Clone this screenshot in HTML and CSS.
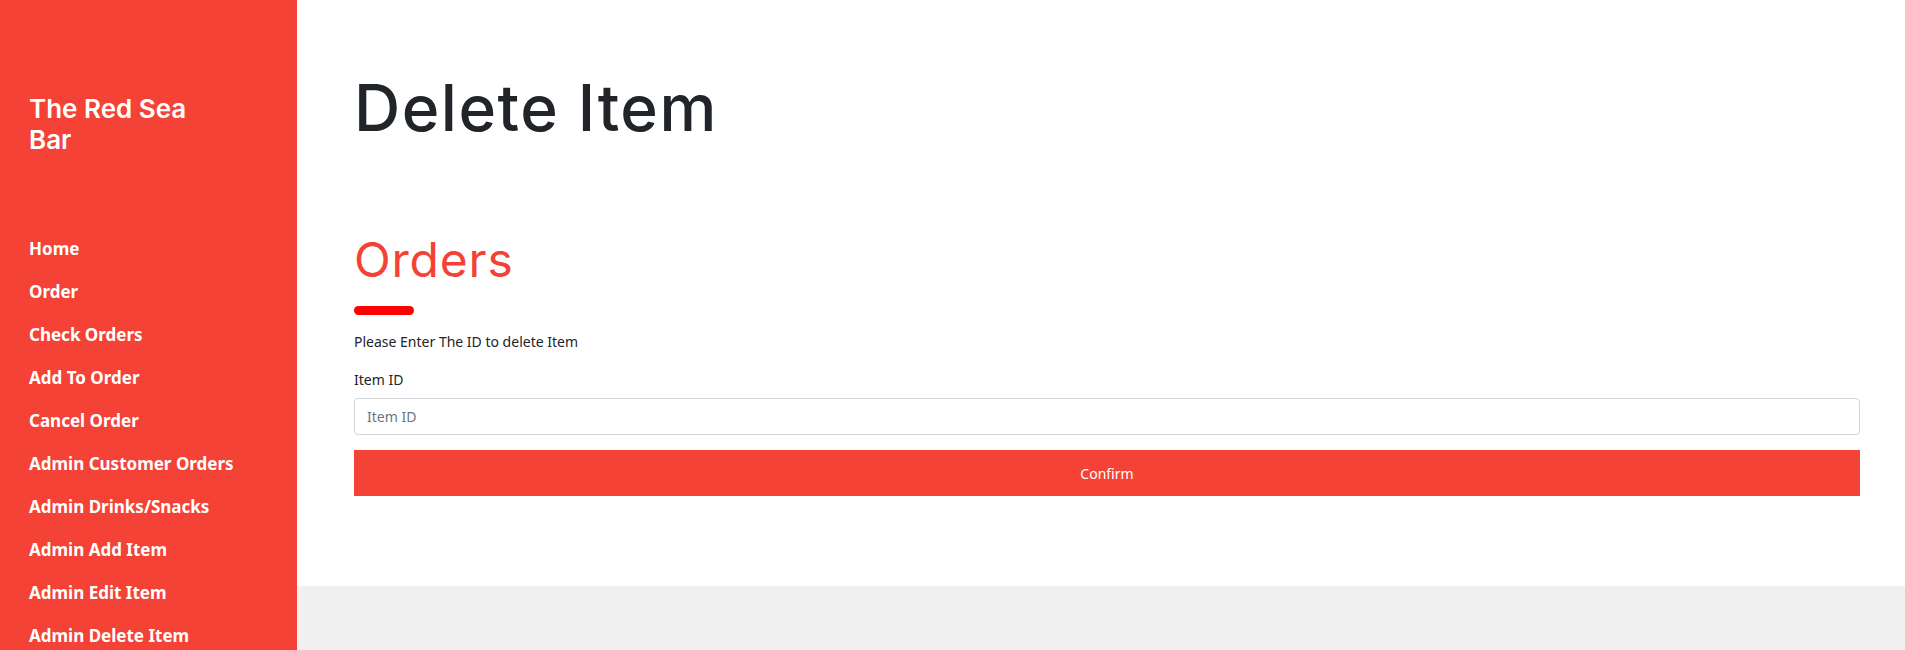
FILE: index.html
```html
<!DOCTYPE html>
<html lang="en">
<head>
<meta charset="utf-8">
<title>Delete Item</title>
<link rel="stylesheet" href="styles.css">
</head>
<body>
<aside class="sidebar">
  <h3 class="brand">The Red Sea Bar</h3>
  <ul class="nav">
    <li><a href="#">Home</a></li>
    <li><a href="#">Order</a></li>
    <li><a href="#">Check Orders</a></li>
    <li><a href="#">Add To Order</a></li>
    <li><a href="#">Cancel Order</a></li>
    <li><a href="#">Admin Customer Orders</a></li>
    <li><a href="#">Admin Drinks/Snacks</a></li>
    <li><a href="#">Admin Add Item</a></li>
    <li><a href="#">Admin Edit Item</a></li>
    <li><a href="#">Admin Delete Item</a></li>
  </ul>
</aside>
<main class="main">
  <section class="panel">
    <h1 class="page-title">Delete Item</h1>
    <h2 class="section-title">Orders</h2>
    <div class="underline"></div>
    <p class="intro">Please Enter The ID to delete Item</p>
    <form class="form">
      <label class="label" for="itemid">Item ID</label>
      <input class="input" id="itemid" type="text" placeholder="Item ID">
      <button class="btn" type="button">Confirm</button>
    </form>
  </section>
</main>
</body>
</html>
```
FILE: styles.css
```css
html, body {
  margin: 0;
  padding: 0;
  height: 100%;
}
body {
  display: flex;
  background: #f0f0f0;
  font-family: "Noto Sans", "Open Sans", sans-serif;
  color: #212529;
  overflow: hidden;
}
.sidebar {
  width: 297px;
  flex: 0 0 297px;
  background: #f44336;
  padding: 93px 0 0 29px;
  box-sizing: border-box;
  min-height: 650px;
}
.brand {
  margin: 0;
  width: 180px;
  font-family: "Inter", sans-serif;
  font-weight: 600;
  font-size: 26px;
  line-height: 31px;
  letter-spacing: 0;
  color: #fff;
}
.nav {
  list-style: none;
  margin: 72px 0 0;
  padding: 0;
}
.nav li {
  height: 43px;
  line-height: 43px;
}
.nav a {
  color: #fff;
  text-decoration: none;
  font-weight: 700;
  font-size: 17px;
  letter-spacing: 0;
}
.main {
  flex: 1;
}
.panel {
  background: #fff;
  height: 586px;
  box-sizing: border-box;
  padding: 70px 45px 0 57px;
}
.page-title {
  margin: 0;
  font-family: "Inter", sans-serif;
  font-weight: 500;
  font-size: 64px;
  line-height: 76px;
  letter-spacing: 1.5px;
  color: #212529;
}
.section-title {
  margin: 86px 0 0;
  font-family: "Inter", sans-serif;
  font-weight: 400;
  font-size: 48px;
  line-height: 56px;
  letter-spacing: 0.8px;
  color: #f44336;
}
.underline {
  width: 60px;
  height: 9px;
  background: #ff0000;
  border-radius: 5px;
  margin-top: 18px;
}
.intro {
  margin: 17px 0 0;
  font-size: 14px;
  line-height: 20px;
}
.form {
  display: flex;
  flex-direction: column;
}
.label {
  margin-top: 18px;
  font-size: 14px;
  line-height: 20px;
}
.input {
  margin-top: 8px;
  height: 37px;
  box-sizing: border-box;
  border: 1px solid #ced4da;
  border-radius: 4px;
  padding: 0 12px;
  font-family: inherit;
  font-size: 14px;
  color: #495057;
}
.input::placeholder {
  color: #6c757d;
}
.btn {
  margin-top: 15px;
  height: 46px;
  border: 0;
  background: #f44336;
  color: #fff;
  font-family: inherit;
  font-size: 14px;
  font-weight: 400;
}
```
